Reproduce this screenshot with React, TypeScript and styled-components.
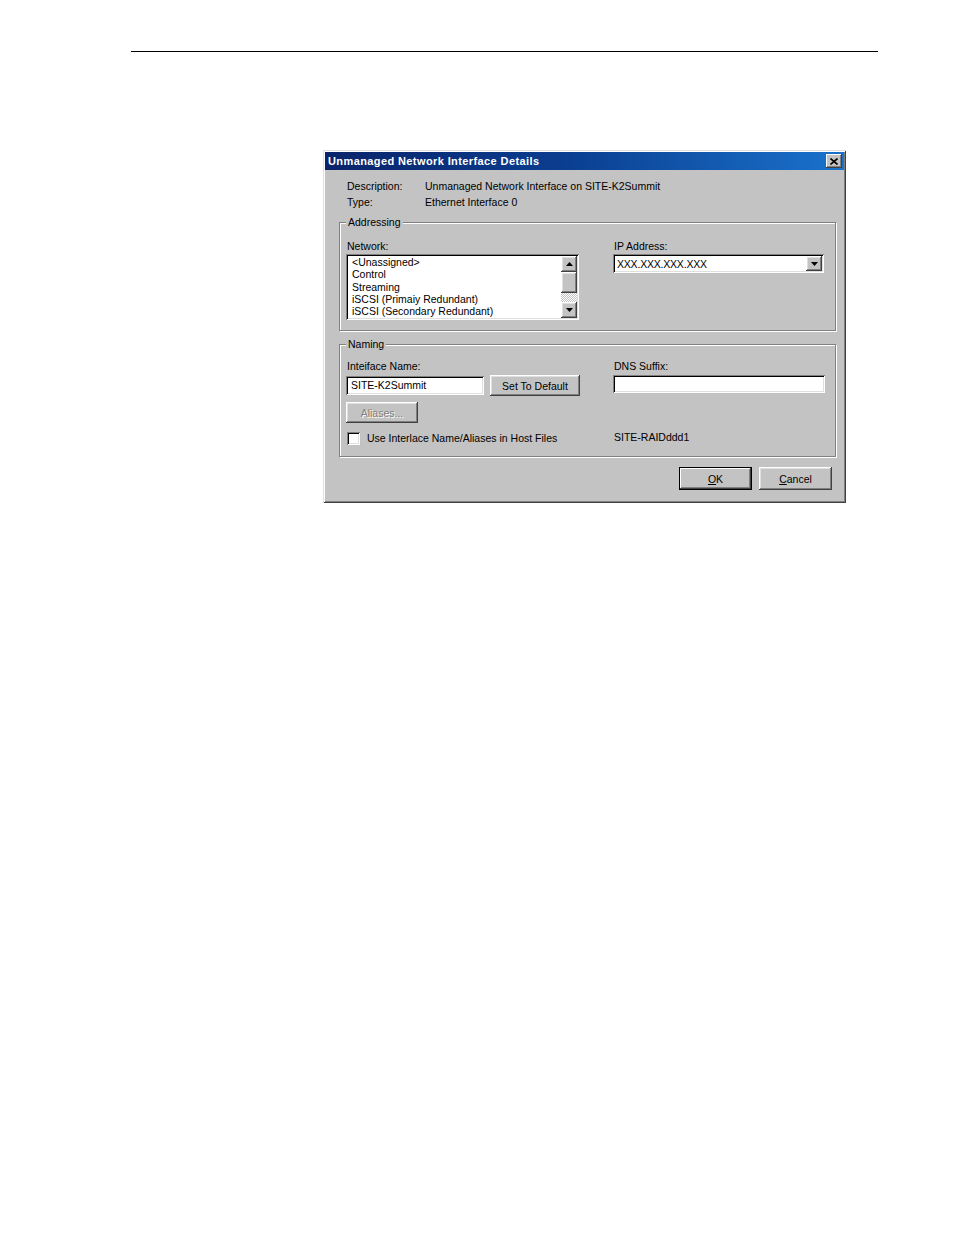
import styled, { createGlobalStyle } from "styled-components";

const GlobalStyle = createGlobalStyle`
  html, body {
    margin: 0;
    padding: 0;
    background: #fff;
  }
  body {
    font-family: "Liberation Sans", Arial, sans-serif;
  }
`;

const Page = styled.div`
  width: 954px;
  min-height: 1235px;
  background: #fff;
  padding-top: 51px;
  box-sizing: border-box;
`;

const HeaderRule = styled.div`
  margin-left: 131px;
  width: 747px;
  height: 1px;
  background: #000;
`;

const Dialog = styled.div`
  margin: 98px 0 0 323px;
  width: 523px;
  height: 353px;
  box-sizing: border-box;
  padding: 2px;
  background: #c3c3c3;
  box-shadow: inset 1px 1px 0 #dfdfdf, inset -1px -1px 0 #404040,
    inset 2px 2px 0 #fff, inset -2px -2px 0 #808080;
  font-size: 10.5px;
  color: #000;
  display: flex;
  flex-direction: column;
`;

const TitleBar = styled.div`
  height: 18px;
  display: flex;
  align-items: center;
  justify-content: space-between;
  padding: 0 2px 0 3px;
  background: linear-gradient(to right, #0a246a 0%, #0a3d8f 45%, #1a72cc 100%);
  color: #fff;
  font-weight: bold;
  font-size: 11px;
  letter-spacing: 0.4px;
`;

const CloseButton = styled.div`
  width: 16px;
  height: 14px;
  box-sizing: border-box;
  background: #c3c3c3;
  box-shadow: inset -1px -1px 0 #404040, inset 1px 1px 0 #fff,
    inset -2px -2px 0 #808080;
  display: flex;
  align-items: center;
  justify-content: center;
`;

const Body = styled.div`
  flex: 1;
  display: flex;
  flex-direction: column;
  padding: 8px 8px 0 14px;
`;

const InfoRow = styled.div`
  display: flex;
  line-height: 16px;
  padding-left: 8px;
`;

const InfoLabel = styled.span`
  width: 78px;
`;

const Group = styled.fieldset<{ $top: number; $inner: number; $bottom: number }>`
  margin: ${(p) => p.$top}px 0 0 0;
  padding: ${(p) => p.$inner}px 6px ${(p) => p.$bottom}px 6px;
  border: 1px solid #808080;
  box-shadow: inset 1px 1px 0 #fff, 1px 1px 0 #fff;
  min-width: 0;
`;

const Legend = styled.legend`
  padding: 0 2px;
  line-height: 14px;
  background: #c3c3c3;
`;

const Columns = styled.div<{ $left: number; $right: number; $gap: number }>`
  display: grid;
  grid-template-columns: ${(p) => p.$left}px ${(p) => p.$right}px;
  column-gap: ${(p) => p.$gap}px;
  align-items: start;
`;

const FieldLabel = styled.div`
  line-height: 16px;
  white-space: nowrap;
  padding-left: 1px;
`;

const sunken = `
  background: #fff;
  box-sizing: border-box;
  box-shadow: inset 1px 1px 0 #808080, inset -1px -1px 0 #fff,
    inset 2px 2px 0 #000, inset -2px -2px 0 #dfdfdf;
`;

const ListBox = styled.div`
  ${sunken}
  height: 66px;
  display: flex;
  padding: 2px;
`;

const ListItems = styled.div`
  flex: 1;
  padding: 0 0 0 4px;
  line-height: 12.3px;
  white-space: nowrap;
  overflow: hidden;
`;

const ScrollBar = styled.div`
  width: 16px;
  display: flex;
  flex-direction: column;
  background-image: repeating-conic-gradient(#fff 0 25%, #c3c3c3 0 50%);
  background-size: 2px 2px;
`;

const raised = `
  background: #c3c3c3;
  box-sizing: border-box;
  box-shadow: inset -1px -1px 0 #404040, inset 1px 1px 0 #fff,
    inset -2px -2px 0 #808080, inset 2px 2px 0 #dfdfdf;
`;

const ScrollArrow = styled.div`
  ${raised}
  height: 16px;
  display: flex;
  align-items: center;
  justify-content: center;
`;

const ScrollThumb = styled.div`
  ${raised}
  height: 21px;
`;

const ScrollTrack = styled.div`
  flex: 1;
`;

const Combo = styled.div`
  ${sunken}
  height: 19px;
  display: flex;
  align-items: center;
  padding: 2px;
`;

const ComboText = styled.span`
  flex: 1;
  padding-left: 2px;
  font-size: 10.5px;
  letter-spacing: -0.2px;
`;

const ComboButton = styled.div`
  ${raised}
  width: 16px;
  height: 15px;
  display: flex;
  align-items: center;
  justify-content: center;
`;

const TextBox = styled.div<{ $width?: number; $height: number }>`
  ${sunken}
  width: ${(p) => (p.$width ? `${p.$width}px` : "auto")};
  height: ${(p) => p.$height}px;
  padding: 0 5px;
  line-height: ${(p) => p.$height}px;
  white-space: nowrap;
`;

const InputRow = styled.div`
  display: flex;
  align-items: center;
  gap: 6px;
  margin-top: 1px;
`;

const Button = styled.div<{ $width: number; $height: number; $default?: boolean; $disabled?: boolean }>`
  ${raised}
  width: ${(p) => p.$width}px;
  height: ${(p) => p.$height}px;
  display: flex;
  align-items: center;
  justify-content: center;
  white-space: nowrap;
  color: ${(p) => (p.$disabled ? "#808080" : "#000")};
  text-shadow: ${(p) => (p.$disabled ? "1px 1px 0 #fff" : "none")};
  ${(p) =>
    p.$default &&
    `
    border: 1px solid #000;
    box-shadow: inset -1px -1px 0 #404040, inset 1px 1px 0 #fff,
      inset -2px -2px 0 #808080;
  `}
`;

const AliasesCell = styled.div`
  margin-top: 6px;
`;

const CheckRow = styled.div`
  display: flex;
  align-items: center;
  gap: 7px;
  line-height: 16px;
  padding-left: 1px;
  margin-top: 7px;
`;

const CheckBox = styled.div`
  ${sunken}
  width: 13px;
  height: 13px;
`;

const StaticText = styled.div`
  line-height: 16px;
  padding-left: 1px;
  margin-top: 6px;
`;

const Buttons = styled.div`
  display: flex;
  justify-content: flex-end;
  gap: 7px;
  margin-top: 10px;
  padding-right: 4px;
`;

const Mnemonic = styled.span`
  text-decoration: underline;
`;

const Arrow = ({ up }: { up?: boolean }) => (
  <svg width="7" height="4" viewBox="0 0 7 4">
    <path d={up ? "M3.5 0 L7 4 L0 4 Z" : "M0 0 L7 0 L3.5 4 Z"} fill="#000" />
  </svg>
);

export default function App() {
  return (
    <>
      <GlobalStyle />
      <Page>
        <HeaderRule />
        <Dialog>
          <TitleBar>
            <span>Unmanaged Network Interface Details</span>
            <CloseButton>
              <svg width="8" height="7" viewBox="0 0 8 7">
                <path d="M0.5 0.5 L7.5 6.5 M7.5 0.5 L0.5 6.5" stroke="#000" strokeWidth="1.6" />
              </svg>
            </CloseButton>
          </TitleBar>
          <Body>
            <InfoRow>
              <InfoLabel>Description:</InfoLabel>
              <span>Unmanaged Network Interface on SITE-K2Summit</span>
            </InfoRow>
            <InfoRow>
              <InfoLabel>Type:</InfoLabel>
              <span>Ethernet Interface 0</span>
            </InfoRow>

            <Group $top={5} $inner={9} $bottom={10}>
              <Legend>Addressing</Legend>
              <Columns $left={233} $right={211} $gap={34}>
                <div>
                  <FieldLabel>Network:</FieldLabel>
                  <ListBox>
                    <ListItems>
                      <div>&lt;Unassigned&gt;</div>
                      <div>Control</div>
                      <div>Streaming</div>
                      <div>iSCSI (Primaiy Redundant)</div>
                      <div>iSCSI (Secondary Redundant)</div>
                    </ListItems>
                    <ScrollBar>
                      <ScrollArrow>
                        <Arrow up />
                      </ScrollArrow>
                      <ScrollThumb />
                      <ScrollTrack />
                      <ScrollArrow>
                        <Arrow />
                      </ScrollArrow>
                    </ScrollBar>
                  </ListBox>
                </div>
                <div>
                  <FieldLabel>IP Address:</FieldLabel>
                  <Combo>
                    <ComboText>XXX.XXX.XXX.XXX</ComboText>
                    <ComboButton>
                      <Arrow />
                    </ComboButton>
                  </Combo>
                </div>
              </Columns>
            </Group>

            <Group $top={6} $inner={7} $bottom={10}>
              <Legend>Naming</Legend>
              <Columns $left={234} $right={212} $gap={33}>
                <FieldLabel>Inteiface Name:</FieldLabel>
                <FieldLabel>DNS Suffix:</FieldLabel>
                <InputRow>
                  <TextBox $width={138} $height={19}>SITE-K2Summit</TextBox>
                  <Button $width={90} $height={21}>Set To Default</Button>
                </InputRow>
                <InputRow>
                  <TextBox $width={212} $height={18} />
                </InputRow>
                <AliasesCell>
                  <Button $width={72} $height={21} $disabled>
                    Aliases...
                  </Button>
                </AliasesCell>
                <div />
                <CheckRow>
                  <CheckBox />
                  <span>Use Interlace Name/Aliases in Host Files</span>
                </CheckRow>
                <StaticText>SITE-RAIDddd1</StaticText>
              </Columns>
            </Group>

            <Buttons>
              <Button $width={73} $height={23} $default>
                <span>
                  <Mnemonic>O</Mnemonic>K
                </span>
              </Button>
              <Button $width={73} $height={23}>
                <span>
                  <Mnemonic>C</Mnemonic>ancel
                </span>
              </Button>
            </Buttons>
          </Body>
        </Dialog>
      </Page>
    </>
  );
}
